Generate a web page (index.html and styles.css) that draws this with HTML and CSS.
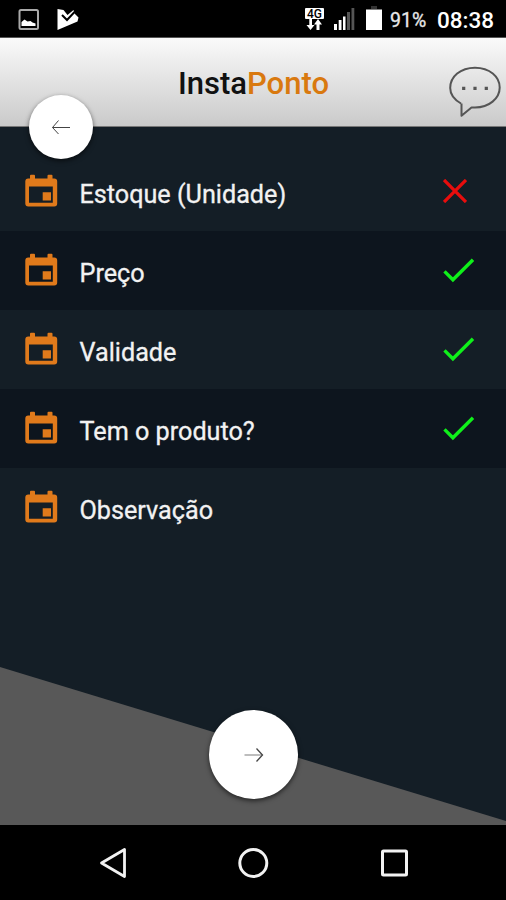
FILE: index.html
```html
<!DOCTYPE html>
<html lang="pt-BR">
<head>
<meta charset="utf-8">
<meta name="viewport" content="width=device-width, initial-scale=1">
<title>InstaPonto</title>
<link rel="stylesheet" href="styles.css">
</head>
<body>
<svg class="defs" width="0" height="0" aria-hidden="true">
  <symbol id="calendar" viewBox="0 0 32 32" overflow="visible">
    <path fill="currentColor" fill-rule="evenodd" d="M5 .8a1 1 0 0 1 1-1h3a1 1 0 0 1 1 1v2.700h12.500V.8a1 1 0 0 1 1-1h3a1 1 0 0 1 1 1v2.700h1.700a3 3 0 0 1 3 3v22a3 3 0 0 1-3 3H3.300a3 3 0 0 1-3-3v-22a3 3 0 0 1 3-3H5zM4 11.500v16.300h23.800V11.500zM17.700 17.300h8.300v8.300h-8.300z"/>
  </symbol>
  <symbol id="check" viewBox="0 0 32 26">
    <path fill="none" stroke="currentColor" stroke-width="3.400" d="M1.500 13.400l8.400 8.400L30 1.800"/>
  </symbol>
  <symbol id="cross" viewBox="0 0 24 24">
    <path fill="none" stroke="currentColor" stroke-width="3.300" d="M1 1l22 22M23 1L1 23"/>
  </symbol>
</svg>
<div class="screen">
  <div class="status">
    <svg class="status-left" width="62" height="24" viewBox="0 0 62 24">
      <rect x="1.500" y="2" width="18.500" height="19" rx="1.500" fill="none" stroke="#aaa" stroke-width="2"/>
      <path fill="#fff" d="M3.500 18v-4l3-2.500 3 2 3-.5 2 1.500 3 1V18z"/>
      <path fill="#fff" d="M39.500 1l6 1 4 5 6-5 1 3.500 4 4-1 4L39.500 22z"/>
      <path fill="none" stroke="#000" stroke-width="2" d="M44 7l5 5 7.500-8"/>
    </svg>
    <div class="status-right">
      <div class="network">
        <span class="network-label">4G</span>
        <svg width="17" height="12" viewBox="0 0 17 12"><path fill="#fff" d="M3.300 0h2.700v6h2.500l-4 5-4-5h2.800zM10.500 11V5.500H8l4-5.500 4 5.500h-2.500V11z"/></svg>
      </div>
      <svg class="signal" width="21" height="23" viewBox="0 0 21 23">
        <path fill="#fff" d="M0 16h3v6H0zM4.700 12h2.800v10H4.700zM9 8.500h2.500V22H9z"/>
        <path fill="#555" d="M13 4h3v18h-3zM17.500 0h2.800v22h-2.800z"/>
      </svg>
      <svg class="battery" width="16" height="24" viewBox="0 0 16 24">
        <path fill="#333" d="M5 0h6v3H5z"/><path fill="#fff" d="M0 3.500h16V24H0z"/>
      </svg>
      <span class="percent">91%</span>
      <span class="clock">08:38</span>
    </div>
  </div>
  <header class="header">
    <h1 class="brand">Insta<span class="accent">Ponto</span></h1>
    <svg class="chat" width="54" height="54" viewBox="0 0 54 54">
      <path fill="none" stroke="#555" stroke-width="2" stroke-linejoin="round" d="M13 39.500C6 35.500 2.200 30.500 2.200 24 2.200 12.500 12.500 3.700 27 3.700S51.700 12.500 51.700 23.500 41 43.500 27 43.500h-3.500L13.500 51.800V39.500"/>
      <path fill="#555" d="M14.100 22.700h3.200v3.200h-3.200zM25.400 22.700h3.200v3.200h-3.200zM36.700 22.700h3.200v3.200h-3.200z"/>
    </svg>
    <button class="round back" aria-label="Voltar">
      <svg width="20" height="16" viewBox="0 0 20 16"><path fill="none" stroke="#444" d="M19 8.500H1.500M7.500 1.500l-6 7 6 6.500"/></svg>
    </button>
  </header>
  <main class="content">
    <ul class="list">
      <li class="row"><svg class="calendar"><use href="#calendar"/></svg><span class="label">Estoque (Unidade)</span><span class="state"><svg class="cross"><use href="#cross"/></svg></span></li>
      <li class="row"><svg class="calendar"><use href="#calendar"/></svg><span class="label">Preço</span><span class="state"><svg class="check"><use href="#check"/></svg></span></li>
      <li class="row"><svg class="calendar"><use href="#calendar"/></svg><span class="label">Validade</span><span class="state"><svg class="check"><use href="#check"/></svg></span></li>
      <li class="row"><svg class="calendar"><use href="#calendar"/></svg><span class="label">Tem o produto?</span><span class="state"><svg class="check"><use href="#check"/></svg></span></li>
      <li class="row"><svg class="calendar"><use href="#calendar"/></svg><span class="label">Observação</span></li>
    </ul>
    <div class="footer">
      <button class="round next" aria-label="Avançar">
        <svg width="20" height="16" viewBox="0 0 20 16"><path fill="none" stroke="#999" stroke-width="1.300" d="M.5 8H18"/><path fill="none" stroke="#444" stroke-width="1.300" d="M12.500 1.500L18.500 8l-6 6.500"/></svg>
      </button>
    </div>
  </main>
  <nav class="nav">
    <svg width="28" height="32" viewBox="0 0 28 32"><path fill="none" stroke="#f2f2f2" stroke-width="2.800" stroke-linejoin="round" d="M25.500 2.500v27L2.500 16z"/></svg>
    <svg width="32" height="32" viewBox="0 0 32 32"><circle cx="15.300" cy="16" r="13.500" fill="none" stroke="#f2f2f2" stroke-width="3"/></svg>
    <svg width="28" height="32" viewBox="0 0 28 32"><rect x="1.500" y="4" width="24" height="24" rx="1" fill="none" stroke="#f2f2f2" stroke-width="3"/></svg>
  </nav>
</div>
</body>
</html>
```
FILE: styles.css
```css
* { box-sizing: border-box; }
body { margin: 0; background: #000; font-family: Roboto, "Liberation Sans", sans-serif; }
svg { display: block; flex: none; }
.defs { position: absolute; }
.screen { display: flex; flex-direction: column; width: 506px; height: 900px; overflow: hidden; }

.status { display: flex; justify-content: space-between; height: 38px; padding: 8px 12px 0 18px; background: #000; color: #fff; border-bottom: 1px solid #555; }
.status-right { display: flex; align-items: flex-start; }
.network { display: flex; flex-direction: column; align-items: center; width: 19px; margin-right: 10px; }
.network-label { width: 19px; height: 11px; border-radius: 1px; background: #fff; color: #000; font-size: 12px; font-weight: 500; line-height: 12px; text-align: center; }
.signal { margin-right: 11px; }
.battery { margin: -2px 8px 0 0; }
.percent { width: 36px; margin-right: 11px; font-size: 19.500px; line-height: 25px; color: #e8e8e8; white-space: nowrap; -webkit-text-stroke: .3px; }
.clock { width: 57px; font-size: 22.500px; font-weight: 500; line-height: 25px; white-space: nowrap; }

.header { position: relative; display: flex; align-items: center; justify-content: center; height: 89px; flex: none; background: linear-gradient(#fafafa, #cacaca); border-bottom: 1px solid #777; }
.brand { margin: 3px 0 0 1px; font-size: 31px; font-weight: 500; line-height: 34px; color: #111; white-space: nowrap; }
.accent { color: #d9790f; }
.chat { position: absolute; right: 4px; top: 26px; }

.round { display: flex; align-items: center; justify-content: center; padding: 0; border: 0; border-radius: 50%; background: #fff; box-shadow: 0 2px 5px rgba(0, 0, 0, .6); }
.back { position: absolute; left: 29px; top: 57px; width: 64px; height: 64px; z-index: 1; }
.next { width: 89px; height: 89px; }

.content { display: flex; flex-direction: column; flex: 1; padding-top: 25px; background: #141e26; }
.list { margin: 0; padding: 0; list-style: none; }
.row { display: flex; align-items: center; height: 79px; padding: 0 31px 0 25px; }
.row:nth-child(even) { background: #0d151e; }
.calendar { width: 32px; height: 32px; margin: -1px 22.500px 0 0; color: #e07a1b; overflow: visible; }
.label { flex: 1; margin-top: 6px; font-size: 25.200px; line-height: 32px; color: #f2f2f2; white-space: nowrap; -webkit-text-stroke: .3px; }
.state { width: 32px; }
.check { width: 32px; height: 26px; color: #0ff01a; }
.cross { width: 24px; height: 24px; margin-top: -2px; color: #e80d0d; }

.footer { position: relative; display: flex; align-items: flex-start; justify-content: center; height: 158px; margin-top: auto; padding: 43px 0 0 1px; isolation: isolate; }
.footer::before { content: ""; position: absolute; inset: 0; z-index: -1; background: #585858; clip-path: polygon(0 0, 100% 154px, 100% 100%, 0 100%); }

.nav { display: flex; justify-content: space-between; height: 75px; flex: none; padding: 22px 97px 0 99px; background: #000; }
```
